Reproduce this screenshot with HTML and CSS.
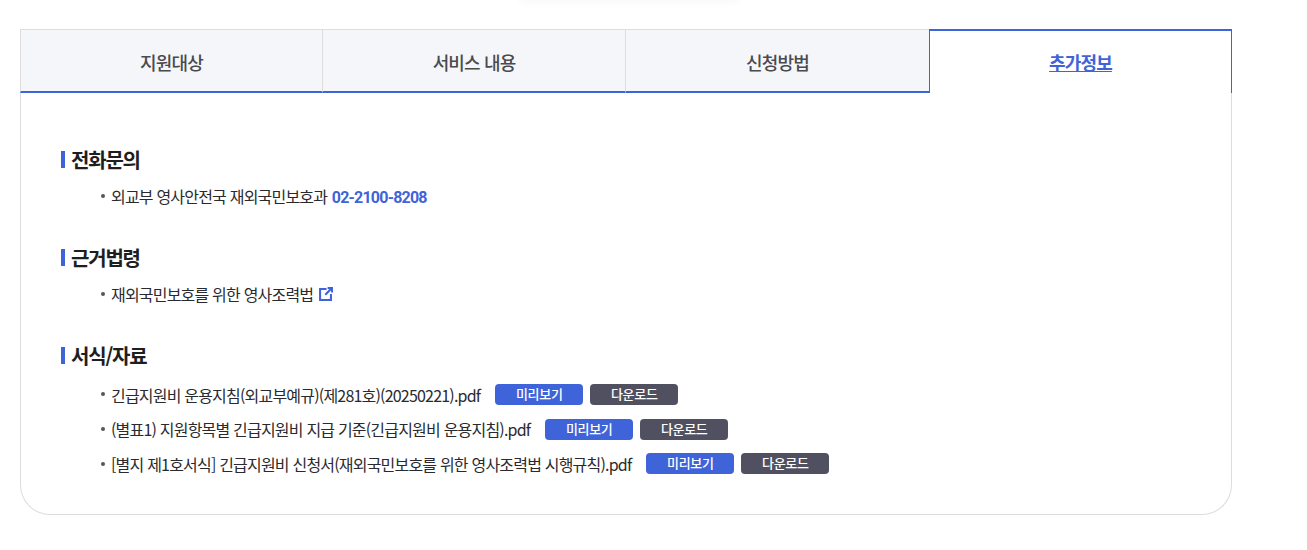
FILE: index.html
```html
<!DOCTYPE html>
<html lang="ko">
<head>
<meta charset="utf-8">
<title>추가정보</title>
<link rel="stylesheet" href="styles.css">
</head>
<body>
<div class="top-shadow"></div>
<main class="wrap">
  <nav class="tabs">
    <a class="tab" href="#">지원대상</a>
    <a class="tab" href="#">서비스 내용</a>
    <a class="tab" href="#">신청방법</a>
    <a class="tab active" href="#">추가정보</a>
  </nav>
  <div class="panel">
    <section class="sec">
      <h3 class="sec-title">전화문의</h3>
      <ul class="list">
        <li class="item">외교부 영사안전국 재외국민보호과 <a class="tel" href="#">02-2100-8208</a></li>
      </ul>
    </section>
    <section class="sec">
      <h3 class="sec-title">근거법령</h3>
      <ul class="list">
        <li class="item">재외국민보호를 위한 영사조력법
          <svg class="ext" viewBox="0 0 13 13" width="14" height="14" aria-hidden="true">
            <path d="M7 1.9H1V12H11.1V6.5" fill="none" stroke="#3f63d8" stroke-width="1.9"/>
            <path d="M8 0.9H12.1V5" fill="none" stroke="#3f63d8" stroke-width="1.8"/>
            <path d="M11.8 1.2L5.8 7.2" fill="none" stroke="#3f63d8" stroke-width="2"/>
          </svg>
        </li>
      </ul>
    </section>
    <section class="sec">
      <h3 class="sec-title">서식/자료</h3>
      <ul class="list files">
        <li class="item file"><span>긴급지원비 운용지침(외교부예규)(제281호)(20250221).pdf</span><a class="btn view" href="#">미리보기</a><a class="btn down" href="#">다운로드</a></li>
        <li class="item file"><span>(별표1) 지원항목별 긴급지원비 지급 기준(긴급지원비 운용지침).pdf</span><a class="btn view" href="#">미리보기</a><a class="btn down" href="#">다운로드</a></li>
        <li class="item file"><span>[별지 제1호서식] 긴급지원비 신청서(재외국민보호를 위한 영사조력법 시행규칙).pdf</span><a class="btn view" href="#">미리보기</a><a class="btn down" href="#">다운로드</a></li>
      </ul>
    </section>
  </div>
</main>
</body>
</html>
```

FILE: styles.css
```css
* { box-sizing: border-box; }
html, body { margin: 0; padding: 0; background: #fff; }
body {
  font-family: "Noto Sans CJK KR", "Noto Sans", sans-serif;
  color: #222;
  height: 550px;
  overflow: hidden;
}
.top-shadow {
  position: absolute;
  left: 520px;
  top: -14px;
  width: 220px;
  height: 14px;
  box-shadow: 0 2px 10px rgba(0, 0, 0, 0.03);
}
.wrap {
  width: 1212px;
  margin: 29px 0 0 20px;
}
.tabs { display: flex; height: 64px; }
.tab {
  flex: 0 0 303px;
  display: flex;
  align-items: center;
  justify-content: center;
  padding-top: 2px;
  background: #f5f6fa;
  border-top: 1px solid #dddde0;
  border-left: 1px solid #dddde0;
  border-bottom: 2px solid #3f63d8;
  font-size: 18px;
  font-weight: 500;
  letter-spacing: -0.85px;
  color: #4a4a4f;
  text-decoration: none;
}
.tab:nth-child(1) { flex-basis: 302px; }
.tab:nth-child(3) { flex-basis: 304px; }
.tab.active {
  padding-top: 0;
  background: #fff;
  border: 1px solid #3f63d8;
  border-top-width: 2px;
  border-bottom: 0;
  color: #3f63d8;
  font-weight: 700;
  text-decoration: underline;
}
.panel {
  height: 422px;
  padding: 55px 40px 0;
  border: 1px solid #dddde0;
  border-top: 0;
  border-radius: 0 0 30px 30px;
}
.sec { height: 98px; }
.sec-title {
  position: relative;
  margin: 0;
  padding-left: 10px;
  height: 24px;
  font-size: 20px;
  line-height: 24px;
  font-weight: 700;
  letter-spacing: -1.2px;
  color: #1e1e1e;
  display: flex;
  align-items: center;
}
.sec-title::before {
  content: "";
  position: absolute;
  left: 0;
  top: 3px;
  width: 4px;
  height: 17px;
  background: #3f63d8;
}
.list {
  list-style: none;
  margin: 11px 0 0;
  padding: 0 0 0 50px;
}
.item {
  position: relative;
  font-size: 16px;
  line-height: 26px;
  letter-spacing: -0.8px;
  color: #2a2a2e;
}
.item::before {
  content: "";
  position: absolute;
  left: -10px;
  top: 11px;
  width: 4px;
  height: 4px;
  border-radius: 50%;
  background: #55555f;
}
.tel {
  font-family: Roboto, "Noto Sans CJK KR", sans-serif;
  font-weight: 700;
  color: #3f63d8;
  text-decoration: none;
  margin-left: 1px;
}
.ext { vertical-align: 0; margin-left: 2px; }
.files { margin-top: 9.4px; }
.file {
  display: flex;
  align-items: center;
  height: 34.6px;
  line-height: 34px;
}
.file::before { top: 15px; }
.btn {
  flex: 0 0 88px;
  height: 21px;
  border-radius: 4px;
  font-size: 13px;
  line-height: 20px;
  font-weight: 500;
  letter-spacing: -0.3px;
  text-align: center;
  color: #fff;
  text-decoration: none;
}
.view { margin-left: 15px; background: #3f63d8; }
.down { margin-left: 7px; background: #505060; }
```
